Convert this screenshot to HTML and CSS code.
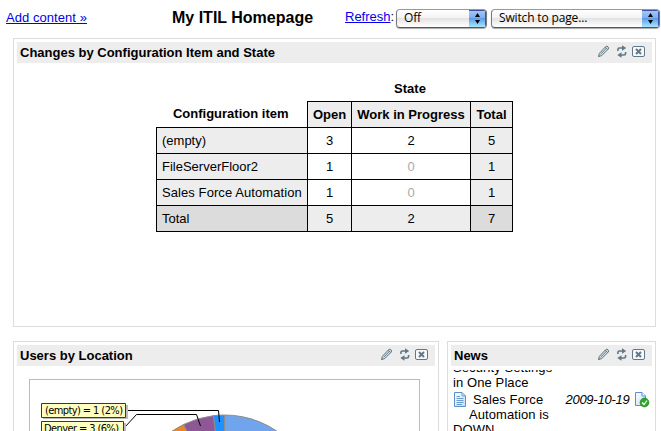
FILE: index.html
```html
<!DOCTYPE html>
<html lang="en">
<head>
<meta charset="utf-8">
<title>My ITIL Homepage</title>
<link rel="stylesheet" href="styles.css">
</head>
<body>
<svg class="defs" width="0" height="0">
  <defs>
    <g id="tools" fill="none" stroke="#607888">
      <path d="M1.5 11.5L2.4 8.3L8.7 1.6Q9.8.7 11 1.7T11.3 4L4.8 10.6Z" fill="#d5dde1"/>
      <path d="M3.7 9.3L9.8 2.8M1.5 11.5L3 10.8M8.2 2.2L10.7 4.6" stroke-width=".9"/>
      <path d="M20.9 6V4.5Q20.9 3 22.4 3H25.5M28.6 7V8.5Q28.6 10 27 10H24" stroke-width="1.6"/>
      <path d="M25 .3L29.2 3L25 5.7ZM24.5 7.3L20.3 10L24.5 12.7Z" fill="#607888" stroke="none"/>
      <rect x="35.5" y="1.5" width="12" height="10" rx="1.5" fill="#f6f8f9"/>
      <path d="M39 4L44 9M44 4L39 9" stroke-width="2"/>
    </g>
    <linearGradient id="sheet" x2="1" y2="1"><stop stop-color="#fff"/><stop offset="1" stop-color="#c3ddf6"/></linearGradient>
  </defs>
</svg>
<header class="topbar">
  <a class="add" href="#">Add content »</a>
  <h1>My ITIL Homepage</h1>
  <span class="refresh"><a href="#">Refresh</a>:</span>
  <div class="select off"><span>Off</span><i><svg width="18" height="17"><path d="M6 7L8.5 3L11 7ZM6 10H11L8.5 14Z"/></svg></i></div>
  <div class="select page"><span>Switch to page...</span><i><svg width="18" height="17"><path d="M6 7L8.5 3L11 7ZM6 10H11L8.5 14Z"/></svg></i></div>
</header>
<main>
  <section class="panel changes">
    <div class="bar"><h2>Changes by Configuration Item and State</h2><svg width="50" height="14"><use href="#tools"/></svg></div>
    <table>
      <colgroup><col class="c1"><col class="c2"><col class="c3"><col class="c4"></colgroup>
      <tr class="top"><th></th><th colspan="3">State</th></tr>
      <tr class="heads"><th class="corner">Configuration item</th><th>Open</th><th>Work in Progress</th><th>Total</th></tr>
      <tr><td>(empty)</td><td>3</td><td>2</td><td>5</td></tr>
      <tr><td>FileServerFloor2</td><td>1</td><td class="zero">0</td><td>1</td></tr>
      <tr><td class="long">Sales Force Automation</td><td>1</td><td class="zero">0</td><td>1</td></tr>
      <tr class="sum"><td>Total</td><td>5</td><td>2</td><td>7</td></tr>
    </table>
  </section>
  <div class="lower">
    <section class="panel users">
      <div class="bar"><h2>Users by Location</h2><svg width="50" height="14"><use href="#tools"/></svg></div>
      <div class="chart">
        <svg width="389" height="51" viewBox="30 380 389 51">
          <g stroke="#8c8c8c">
            <path d="M224.5 508V415A93 93 0 0 1 317.5 508Z" fill="#70a5ee"/>
            <path d="M224.5 508L213.3 415.7A93 93 0 0 1 224.5 415Z" fill="#1e90ff"/>
            <path d="M224.5 508L183.5 424.5A93 93 0 0 1 213.3 415.7Z" fill="#8e5796"/>
            <path d="M224.5 508L131.5 508A93 93 0 0 1 183.5 424.5Z" fill="#ee8422"/>
          </g>
          <path d="M127 410.5H218.5L219.5 422M125 427L136.5 414.5H196.5L200.5 426" fill="none" stroke="#000"/>
          <g fill="#bcbcbc"><path d="M43 405H128V419H43ZM43 423H126V437H43Z"/></g>
          <g fill="#ffffc0" stroke="#38382c"><path d="M41.5 403.5H125.5V417.5H41.5ZM41.5 421.5H123.5V436.5H41.5Z"/></g>
          <g class="labels"><text x="45" y="414" textLength="78">(empty) = 1 (2%)</text><text x="44" y="432" textLength="75">Denver = 3 (6%)</text></g>
        </svg>
      </div>
    </section>
    <section class="panel news">
      <div class="bar"><h2>News</h2><svg width="50" height="14"><use href="#tools"/></svg></div>
      <div class="feed">
        <div class="old">Security Settings<br>in One Place</div>
        <div class="item">
          <div class="story"><svg width="14" height="15"><path d="M1.5.5H9L12.5 4V14.5H1.5Z" fill="url(#sheet)" stroke="#5b8fcc"/><path d="M9 .5V4H12.5M3.5 4.5H7M3.5 6.5H10.5M3.5 8.5H10.5M3.5 10.5H10.5M3.5 12.5H9" fill="none" stroke="#6a9bd2"/></svg><span class="lead">Sales Force</span><br><span class="second">Automation is</span><br>DOWN</div>
          <em>2009-10-19</em>
          <svg class="open" width="16" height="16"><path d="M1.5.5H8L11.5 4V13.5H1.5Z" fill="url(#sheet)" stroke="#5b8fcc"/><path d="M8 .5V4H11.5" fill="#fff" stroke="#5b8fcc"/><circle cx="10.5" cy="10.5" r="4.4" fill="#32a52b" stroke="#168016" stroke-width=".7"/><path d="M8 10.5L10 12.5L13 8.5" fill="none" stroke="#fff" stroke-width="1.2"/></svg>
        </div>
      </div>
    </section>
  </div>
</main>
</body>
</html>
```
FILE: styles.css
```css
* { box-sizing: border-box; }
html, body { height: 431px; overflow: hidden; }
body { margin: 0; background: #fff; color: #000; font: 13px/15px "Liberation Sans", Arial, sans-serif; }
a { color: #0000ee; }
.defs { display: block; }
.topbar { display: flex; height: 38px; padding-left: 6px; white-space: nowrap; }
.add { width: 166px; padding-top: 10px; letter-spacing: .06px; }
h1 { width: 173px; margin: 0; padding-top: 8px; font-size: 16px; line-height: 19px; }
.refresh { width: 51px; padding-top: 9px; }
.select { display: flex; justify-content: space-between; height: 19px; margin-top: 9px; border: 1px solid #777; border-top-color: #999; border-bottom-color: #555; border-radius: 4px; overflow: hidden; background: linear-gradient(#fff 0%, #f3f3f3 45%, #e3e3e3 50%, #fff 100%); box-shadow: 0 1px 1px #aaa; font: 12px/16px "Open Sans", sans-serif; letter-spacing: -.15px; }
.select span { padding-left: 7px; }
.off { width: 91px; margin-right: 4px; }
.page { width: 169px; }
.select i { width: 17px; background: linear-gradient(#a9c8f2 0%, #7eaff0 45%, #5b9cea 50%, #abe4ff 100%); box-shadow: inset -1px 1px #3854a5; }
.select i svg { display: block; }
main { padding-left: 13px; }
.panel { border: 1px solid #dcdcdc; padding: 3px; }
.bar { display: flex; justify-content: space-between; height: 21px; padding: 3px 5px 0 3px; background: #ededed; }
h2 { margin: 0; font-size: 13px; line-height: 15px; white-space: nowrap; }
.changes { width: 643px; height: 289px; }
table { width: 357px; margin: 12px 0 0 139px; border-collapse: collapse; table-layout: fixed; }
.c1 { width: 151px; }
.c2 { width: 44px; }
.c3 { width: 119px; }
.c4 { width: 42px; }
tr { height: 26px; }
th, td { padding: 0; border: 1px solid #000; text-align: center; white-space: nowrap; line-height: 15px; }
.top th { border-style: none; padding-top: 1px; }
.heads .corner { border-top: 0; border-left: 0; padding-right: 2px; }
.heads th:not(.corner), td:first-child, td:last-child, .sum td { background: #ededed; }
td:first-child { padding-left: 5px; text-align: left; }
.long { letter-spacing: .08px; }
.sum td:first-child, .sum td:last-child { background: #dcdcdc; }
.zero { color: #aaa; }
.lower { display: flex; gap: 8px; margin-top: 14px; }
.users, .news { height: 90px; border-bottom: 0; padding-bottom: 0; overflow: hidden; }
.users { width: 426px; }
.news { width: 209px; }
.chart { width: 391px; margin: 13px 0 0 12px; border: 1px solid #bcbcbc; border-bottom: 0; }
.chart svg { display: block; }
.labels { font: 11px "DejaVu Sans Condensed", "DejaVu Sans", sans-serif; font-stretch: condensed; }
.feed { height: 61px; margin-top: 4px; padding: 0 2px; overflow: hidden; }
.old { margin-top: -10px; letter-spacing: .1px; }
.item { display: flex; padding-top: 1px; }
.story { width: 113px; white-space: nowrap; padding-top: 1px; letter-spacing: .08px; }
.story svg { height: 15px; margin-right: 6px; vertical-align: top; }
.second { padding-left: 16px; }
.item em { width: 69px; padding-top: 1px; letter-spacing: -.25px; }
.open { margin-top: 1px; }
```
